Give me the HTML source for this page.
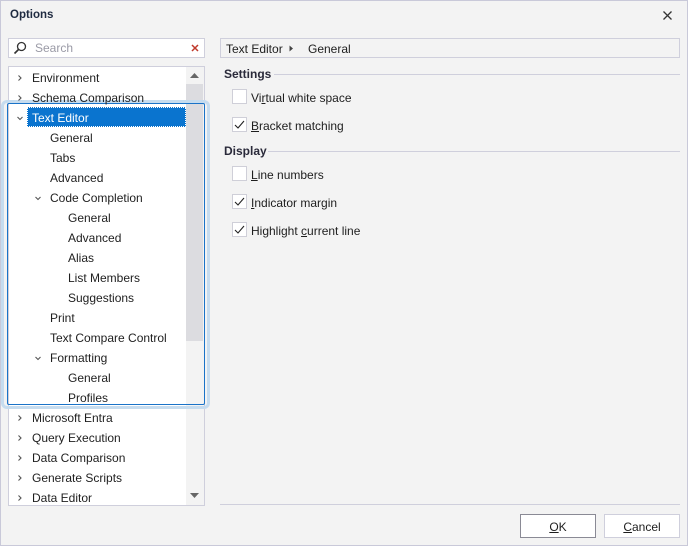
<!DOCTYPE html>
<html><head><style>
*{margin:0;padding:0;box-sizing:border-box}
body{width:688px;height:546px;background:#f3f3f3;font-family:"Liberation Sans",sans-serif;font-size:12px;color:#1e1e1e;position:relative;overflow:hidden}
.abs{position:absolute}
#frame{left:0;top:0;width:688px;height:546px;border:1px solid #c9c9d9}
.row{position:absolute;height:20px;line-height:20px;white-space:nowrap}
.cb{position:absolute;width:15px;height:15px;border:1px solid #cfcfd8;background:#fff}
.lbl{position:absolute;line-height:16px}
u{text-decoration:underline}
</style></head><body>
<div id="frame" class="abs"></div>
<div class="abs" style="left:10px;top:9px;font-weight:bold;font-size:11.5px;color:#1e2a40">Options</div>
<svg class="abs" style="left:662px;top:10px" width="11" height="11"><path d="M1.5 1.5L9.5 9.5M9.5 1.5L1.5 9.5" stroke="#333" stroke-width="1.3"/></svg>

<div class="abs" style="left:8px;top:38px;width:197px;height:20px;background:#fff;border:1px solid #cfcfdc"></div>
<svg class="abs" style="left:13px;top:41px" width="14" height="14"><circle cx="8.5" cy="5.5" r="4" fill="none" stroke="#333" stroke-width="1.3"/><path d="M5.5 8.5L1.5 12.5" stroke="#333" stroke-width="1.6"/></svg>
<div class="abs" style="left:35px;top:41px;color:#9a9aa6">Search</div>
<svg class="abs" style="left:191px;top:44px" width="8" height="8"><path d="M1 1L7 7M7 1L1 7" stroke="#c0392b" stroke-width="1.5"/></svg>

<div class="abs" style="left:8px;top:66px;width:197px;height:440px;background:#fff;border:1px solid #cfcfdc"></div>
<div class="abs" style="left:186px;top:67px;width:18px;height:438px;background:#f3f3f3"></div>
<div class="abs" style="left:186px;top:84px;width:17px;height:257px;background:#dcdce0"></div>
<svg class="abs" style="left:190px;top:72px" width="9" height="6"><path d="M0 6L4.5 1L9 6Z" fill="#666"/></svg>
<svg class="abs" style="left:190px;top:493px" width="9" height="6"><path d="M0 0L4.5 5L9 0Z" fill="#666"/></svg>

<div class="abs" style="left:1px;top:100px;width:209px;height:309px;border:3px solid #c6dcef;border-radius:6px"></div>
<div class="abs" style="left:7px;top:103px;width:198px;height:302px;border:1px solid #1a73c8;border-radius:2px"></div>
<div class="abs" style="left:27px;top:107px;width:159px;height:20px;background:#0a74cf;outline:1px dotted #fff;outline-offset:-1px"></div>

<div id="tree"></div>
<script>
var items=[["Environment",32,1],["Schema Comparison",32,1],["Text Editor",32,2],["General",50],["Tabs",50],["Advanced",50],["Code Completion",50,2],["General",68],["Advanced",68],["Alias",68],["List Members",68],["Suggestions",68],["Print",50],["Text Compare Control",50],["Formatting",50,2],["General",68],["Profiles",68],["Microsoft Entra",32,1],["Query Execution",32,1],["Data Comparison",32,1],["Generate Scripts",32,1],["Data Editor",32,1]];
var h="";
items.forEach(function(it,i){var y=68+i*20;
var col=i==2?"#fff":"#1e1e1e";
h+='<div class="row" style="left:'+it[1]+'px;top:'+y+'px;color:'+col+'">'+it[0]+'</div>';
if(it[2]){var cx=it[1]-16;
if(it[2]==1)h+='<svg class="abs" style="left:'+cx+'px;top:'+(y+6)+'px" width="8" height="8"><path d="M2.5 1.5L5 4L2.5 6.5" fill="none" stroke="#555" stroke-width="1.1"/></svg>';
else h+='<svg class="abs" style="left:'+cx+'px;top:'+(y+6)+'px" width="8" height="8"><path d="M1.5 3L4 5.5L6.5 3" fill="none" stroke="#555" stroke-width="1.1"/></svg>';}
});
document.getElementById("tree").innerHTML=h;
</script>

<div class="abs" style="left:220px;top:38px;width:460px;height:20px;border:1px solid #cfcfdc"></div>
<div class="abs" style="left:226px;top:42px">Text Editor</div>
<svg class="abs" style="left:289px;top:45px" width="5" height="7"><path d="M0.5 0.5L4 3.5L0.5 6.5Z" fill="#444"/></svg>
<div class="abs" style="left:308px;top:42px">General</div>

<div class="abs" style="left:224px;top:67px;font-weight:bold;color:#2a2a3a">Settings</div>
<div class="abs" style="left:274px;top:74px;width:406px;height:1px;background:#cfcfdc"></div>
<div class="cb" style="left:232px;top:89px"></div>
<div class="lbl" style="left:251px;top:90px">Vi<u>r</u>tual white space</div>
<div class="cb" style="left:232px;top:117px"></div>
<div class="lbl" style="left:251px;top:118px"><u>B</u>racket matching</div>

<div class="abs" style="left:224px;top:144px;font-weight:bold;color:#2a2a3a">Display</div>
<div class="abs" style="left:268px;top:151px;width:412px;height:1px;background:#cfcfdc"></div>
<div class="cb" style="left:232px;top:166px"></div>
<div class="lbl" style="left:251px;top:167px"><u>L</u>ine numbers</div>
<div class="cb" style="left:232px;top:194px"></div>
<div class="lbl" style="left:251px;top:195px"><u>I</u>ndicator margin</div>
<div class="cb" style="left:232px;top:222px"></div>
<div class="lbl" style="left:251px;top:223px">Highlight <u>c</u>urrent line</div>
<svg class="abs" style="left:234px;top:120px" width="11" height="10"><path d="M1 5L4 8L10 1" fill="none" stroke="#222" stroke-width="1.1"/></svg>
<svg class="abs" style="left:234px;top:197px" width="11" height="10"><path d="M1 5L4 8L10 1" fill="none" stroke="#222" stroke-width="1.1"/></svg>
<svg class="abs" style="left:234px;top:225px" width="11" height="10"><path d="M1 5L4 8L10 1" fill="none" stroke="#222" stroke-width="1.1"/></svg>

<div class="abs" style="left:220px;top:504px;width:460px;height:1px;background:#cfcfdc"></div>
<div class="abs" style="left:520px;top:514px;width:76px;height:24px;background:#fff;border:1px solid #8a8a95;text-align:center;line-height:24px"><u>O</u>K</div>
<div class="abs" style="left:604px;top:514px;width:76px;height:24px;background:#fff;border:1px solid #cfcfdc;text-align:center;line-height:24px"><u>C</u>ancel</div>
</body></html>
